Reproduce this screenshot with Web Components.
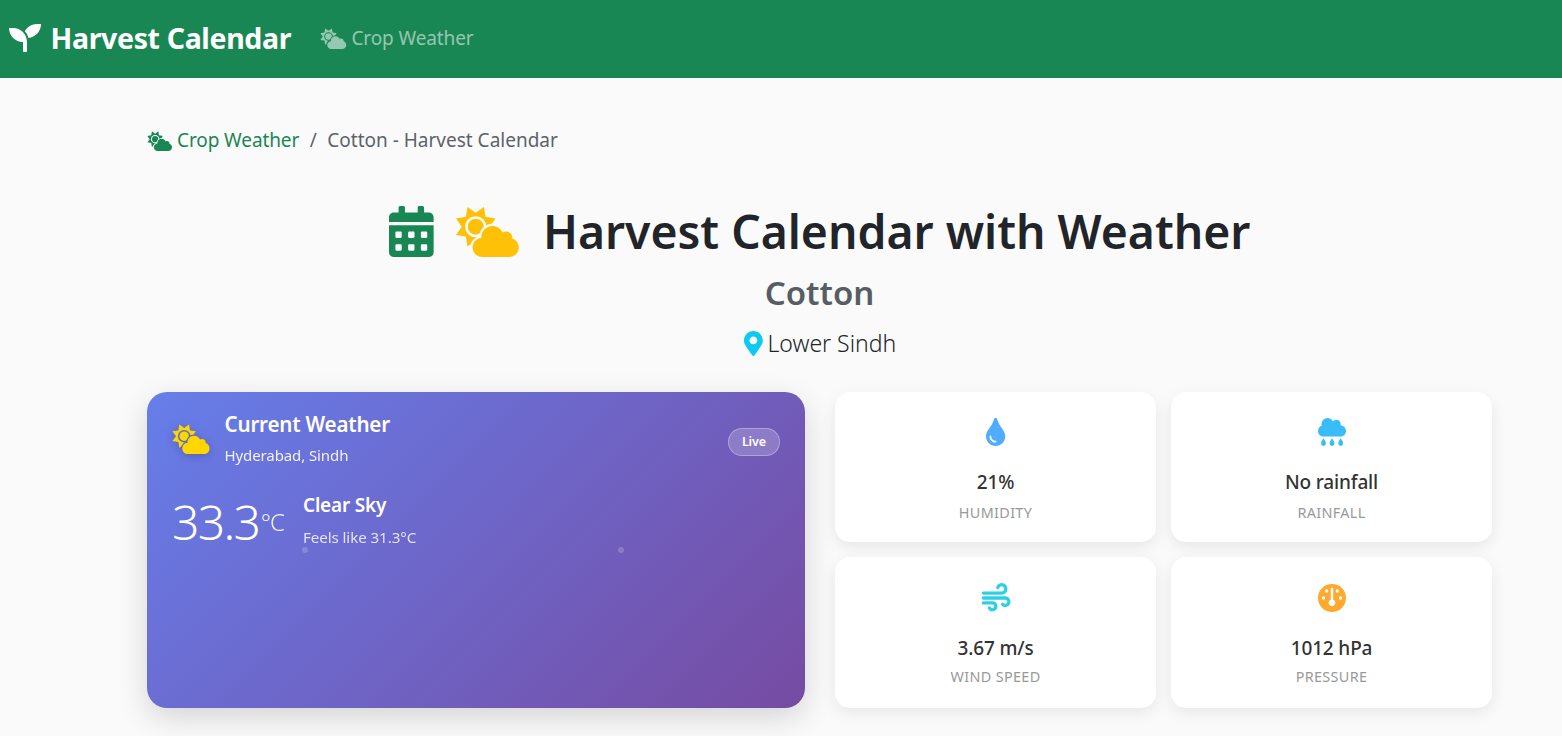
<!DOCTYPE html>
<html>
<head>
<meta charset="utf-8">
<title>Harvest Calendar</title>
<style>
  html, body { margin: 0; padding: 0; height: 100%; overflow: hidden; }
  body { background: #fafafa; font-family: "Noto Sans", "Open Sans", sans-serif; color: #212529; }
</style>
</head>
<body>
<app-navbar></app-navbar>
<page-main>
  <crumb-bar></crumb-bar>
  <page-title></page-title>
  <weather-grid>
    <weather-card></weather-card>
    <stat-card icon="droplet" color="#4facfe" value="21%" label="Humidity"></stat-card>
    <stat-card icon="rain" color="#38bdf8" value="No rainfall" label="Rainfall"></stat-card>
    <stat-card icon="wind" color="#2dd0e4" value="3.67 m/s" label="Wind Speed"></stat-card>
    <stat-card icon="gauge" color="#ffa92e" value="1012 hPa" label="Pressure"></stat-card>
  </weather-grid>
</page-main>

<script>
const CLOUD = 'M575.2 325.7c.2-1.9.8-3.7.8-5.7 0-35.3-28.7-64-64-64-12.6 0-24.2 3.8-34.1 10-17.6-38.8-56.5-66-101.9-66-61.8 0-112 50.1-112 112 0 3 .7 5.8.9 8.7-49.6 3.7-88.9 44.7-88.9 95.3 0 53 43 96 96 96h272c53 0 96-43 96-96 0-42.5-27.8-78.2-64.8-90.3z';

function sunStar() {
  const pts = [];
  for (let i = 0; i < 16; i++) {
    const r = i % 2 ? 140 : 215;
    const a = (i * 22.5 + 22.5) * Math.PI / 180;
    pts.push((208 + r * Math.sin(a)).toFixed(1) + ',' + (208 - r * Math.cos(a)).toFixed(1));
  }
  return pts.join(' ');
}

const ICONS = {
  seedling: ['0 0 512 512', '<path d="M64 96H0c0 123.7 100.3 224 224 224v144c0 8.8 7.2 16 16 16h32c8.8 0 16-7.2 16-16V320C288 196.3 187.7 96 64 96zm384-64c-84.2 0-157.4 46.5-195.7 115.2 27.7 30.2 48.2 66.9 59 107.6C424 243.1 512 147.9 512 32h-64z"/>'],
  calendar: ['0 0 448 512', '<path d="M0 464c0 26.5 21.5 48 48 48h352c26.5 0 48-21.5 48-48V192H0v272zm320-196c0-6.6 5.4-12 12-12h40c6.6 0 12 5.4 12 12v40c0 6.6-5.4 12-12 12h-40c-6.6 0-12-5.4-12-12v-40zm0 128c0-6.6 5.4-12 12-12h40c6.6 0 12 5.4 12 12v40c0 6.6-5.4 12-12 12h-40c-6.6 0-12-5.4-12-12v-40zM192 268c0-6.6 5.4-12 12-12h40c6.6 0 12 5.4 12 12v40c0 6.6-5.4 12-12 12h-40c-6.6 0-12-5.4-12-12v-40zm0 128c0-6.6 5.4-12 12-12h40c6.6 0 12 5.4 12 12v40c0 6.6-5.4 12-12 12h-40c-6.6 0-12-5.4-12-12v-40zM64 268c0-6.6 5.4-12 12-12h40c6.6 0 12 5.4 12 12v40c0 6.6-5.4 12-12 12H76c-6.6 0-12-5.4-12-12v-40zm0 128c0-6.6 5.4-12 12-12h40c6.6 0 12 5.4 12 12v40c0 6.6-5.4 12-12 12H76c-6.6 0-12-5.4-12-12v-40zM400 64h-48V16c0-8.8-7.2-16-16-16h-32c-8.8 0-16 7.2-16 16v48H160V16c0-8.8-7.2-16-16-16h-32c-8.8 0-16 7.2-16 16v48H48C21.5 64 0 85.5 0 112v48h448v-48c0-26.5-21.5-48-48-48z"/>'],
  marker: ['0 0 384 512', '<path d="M172.268 501.67C26.97 291.031 0 269.413 0 192 0 85.961 85.961 0 192 0s192 85.961 192 192c0 77.413-26.97 99.031-172.268 309.67-9.535 13.774-29.93 13.773-39.464 0zM192 272c44.183 0 80-35.817 80-80s-35.817-80-80-80-80 35.817-80 80 35.817 80 80 80z"/>'],
  droplet: ['0 0 352 512', '<path d="M205.22 22.09c-7.94-28.78-49.44-30.12-58.44 0C100.01 179.85 0 222.72 0 333.91 0 432.35 78.72 512 176 512s176-79.65 176-178.09c0-111.75-99.79-153.34-146.78-311.82zM176 448c-61.75 0-112-50.25-112-112 0-8.84 7.16-16 16-16s16 7.16 16 16c0 44.11 35.89 80 80 80 8.84 0 16 7.16 16 16s-7.16 16-16 16z"/>'],
  rain: ['0 0 512 512', '<path transform="scale(1 1.06)" d="M416 128c-.6 0-1.1.2-1.6.2 1.1-5.2 1.6-10.6 1.6-16.2 0-44.2-35.8-80-80-80-24.6 0-46.3 11.3-61 28.8C256.4 24.8 219.3 0 176 0 114.1 0 64 50.1 64 112c0 7.3.8 14.4 2.1 21.3C27.8 145.8 0 181.5 0 224c0 53 43 96 96 96h320c53 0 96-43 96-96s-43-96-96-96z"/><path d="M100 372c-20 34-44 60-44 94a44 44 0 0 0 88 0c0-34-24-60-44-94zM256 372c-20 34-44 60-44 94a44 44 0 0 0 88 0c0-34-24-60-44-94zM415 372c-20 34-44 60-44 94a44 44 0 0 0 88 0c0-34-24-60-44-94z"/>'],
  wind: ['0 0 512 512', '<g fill="none" stroke="currentColor" stroke-width="60" stroke-linecap="round"><path d="M24 165H360a76 76 0 1 0-72-100"/><path d="M24 256H425a68 68 0 1 1-48 116"/><path d="M24 347H190a62 62 0 1 1-54 92"/></g>'],
  gauge: ['0 0 512 512', '<circle cx="256" cy="256" r="256"/><g fill="#fff"><path d="M234 90a22 22 0 0 1 44 0v196a62 62 0 1 1-44 0z"/><circle cx="160" cy="128" r="30"/><circle cx="352" cy="128" r="30"/><circle cx="100" cy="256" r="30"/><circle cx="412" cy="256" r="30"/></g>']
};

class FaIcon extends HTMLElement {
  connectedCallback() {
    const root = this.attachShadow({ mode: 'open' });
    const name = this.getAttribute('name');
    let svg;
    if (name === 'cloud-sun') {
      svg = `<svg viewBox="0 0 640 512" fill="currentColor">
        <mask id="m" maskUnits="userSpaceOnUse" x="0" y="0" width="640" height="512">
          <polygon points="${sunStar()}" fill="#fff"/>
          <circle cx="208" cy="208" r="106" fill="#000"/>
          <circle cx="208" cy="208" r="80" fill="#fff"/>
          <path d="${CLOUD}" fill="#000" stroke="#000" stroke-width="44"/>
        </mask>
        <rect width="640" height="512" mask="url(#m)"/>
        <path d="${CLOUD}"/>
      </svg>`;
    } else {
      const [box, body] = ICONS[name];
      svg = `<svg viewBox="${box}" fill="currentColor">${body}</svg>`;
    }
    root.innerHTML = `<style>
      :host { display: inline-flex; line-height: 0; flex: none; }
      svg { height: 100%; width: auto; display: block; overflow: visible; }
    </style>${svg}`;
  }
}
customElements.define('fa-icon', FaIcon);

class AppNavbar extends HTMLElement {
  connectedCallback() {
    this.attachShadow({ mode: 'open' }).innerHTML = `
      <style>
        :host { display: flex; align-items: center; height: 78px; background: #198754; padding-left: 9px; padding-bottom: 2px; box-sizing: border-box; }
        .brand { display: flex; align-items: center; color: #fff; font-size: 28.5px; font-weight: 700; letter-spacing: -0.35px; }
        .brand fa-icon { height: 32px; margin-right: 9.5px; margin-top: -1px; }
        .link { display: flex; align-items: center; margin-left: 29px; color: rgba(255,255,255,.55); font-size: 19px; letter-spacing: -0.1px; }
        .link fa-icon { height: 21px; margin-right: 5px; margin-top: 1px; }
      </style>
      <div class="brand"><fa-icon name="seedling"></fa-icon>Harvest Calendar</div>
      <div class="link"><fa-icon name="cloud-sun"></fa-icon>Crop Weather</div>
    `;
  }
}
customElements.define('app-navbar', AppNavbar);

class PageMain extends HTMLElement {
  connectedCallback() {
    this.attachShadow({ mode: 'open' }).innerHTML = `
      <style>
        :host { display: block; padding: 47px 70px 0 147px; }
      </style>
      <slot></slot>
    `;
  }
}
customElements.define('page-main', PageMain);

class CrumbBar extends HTMLElement {
  connectedCallback() {
    this.attachShadow({ mode: 'open' }).innerHTML = `
      <style>
        :host { display: flex; align-items: center; height: 30px; font-size: 19px; color: #5c636a; }
        .home { display: flex; align-items: center; color: #198754; letter-spacing: -0.1px; }
        fa-icon { height: 20px; margin-right: 5px; margin-top: 1px; }
        .sep { padding: 0 10.5px; }
      </style>
      <span class="home"><fa-icon name="cloud-sun"></fa-icon>Crop Weather</span>
      <span class="sep">/</span>
      <span>Cotton - Harvest Calendar</span>
    `;
  }
}
customElements.define('crumb-bar', CrumbBar);

class PageTitle extends HTMLElement {
  connectedCallback() {
    this.attachShadow({ mode: 'open' }).innerHTML = `
      <style>
        :host { display: flex; flex-direction: column; align-items: center; margin-top: 45px; }
        h1 { display: flex; align-items: center; margin: 0; height: 62px; font-size: 46.3px; font-weight: 600; color: #212529; }
        h1 fa-icon { height: 51px; }
        .cal { color: #198754; margin-right: 22px; }
        .sun { color: #ffc107; margin-right: 24px; }
        h2 { margin: 8px 0 0; height: 46px; line-height: 46px; font-size: 33px; font-weight: 600; color: #565e64; }
        .place { display: flex; align-items: center; height: 54px; font-size: 23px; font-weight: 300; color: #212529; margin-top: 0; margin-bottom: -1px; }
        .place fa-icon { height: 25px; margin-right: 5px; margin-left: 1px; color: #0dcaf0; }
      </style>
      <h1><fa-icon class="cal" name="calendar"></fa-icon><fa-icon class="sun" name="cloud-sun"></fa-icon>Harvest Calendar with Weather</h1>
      <h2>Cotton</h2>
      <div class="place"><fa-icon name="marker"></fa-icon>Lower Sindh</div>
    `;
  }
}
customElements.define('page-title', PageTitle);

class WeatherGrid extends HTMLElement {
  connectedCallback() {
    this.attachShadow({ mode: 'open' }).innerHTML = `
      <style>
        :host { display: grid; grid-template-columns: 658px 1fr; column-gap: 30px; margin-top: 23px; height: 316px; }
        .stats { display: grid; grid-template-columns: 1fr 1fr; grid-template-rows: 150px 151px; gap: 15px; }
      </style>
      <slot name="main"></slot>
      <div class="stats"><slot></slot></div>
    `;
    this.querySelector('weather-card').slot = 'main';
  }
}
customElements.define('weather-grid', WeatherGrid);

class WeatherCard extends HTMLElement {
  connectedCallback() {
    this.attachShadow({ mode: 'open' }).innerHTML = `
      <style>
        :host { display: block; position: relative; box-sizing: border-box; height: 316px; padding: 19px 25px;
          border-radius: 20px; color: #fff; background: linear-gradient(135deg, #667eea 0%, #764ba2 100%);
          box-shadow: 0 10px 30px rgba(0,0,0,.15); }
        .head { display: flex; align-items: flex-start; justify-content: space-between; }
        .who { display: flex; }
        .who fa-icon { height: 30px; margin: 13px 15px 0 0; color: #ffd600; filter: drop-shadow(0 2px 4px rgba(0,0,0,.2)); }
        .title { font-size: 20.6px; font-weight: 600; line-height: 26px; letter-spacing: -0.2px; }
        .loc { font-size: 15px; line-height: 20px; margin-top: 8px; opacity: .9; letter-spacing: -0.1px; }
        .live { margin-top: 17px; height: 28px; line-height: 26px; box-sizing: border-box; padding: 0 13px; border: 1px solid rgba(255,255,255,.3);
          border-radius: 14px; background: rgba(255,255,255,.2); font-size: 12.5px; font-weight: 600; letter-spacing: -0.1px; }
        .now { display: flex; margin-top: 25px; }
        .temp { width: 131px; font-size: 48px; font-weight: 300; line-height: 64px; letter-spacing: -1.7px; display: flex; align-items: baseline; }
        .temp small { font-size: 24px; font-weight: 300; letter-spacing: -1px; margin-left: 1.5px; opacity: .9; position: relative; top: -9px; }
        .desc { margin: 2px 0 0 0; }
        .sky { font-size: 19px; font-weight: 600; line-height: 26px; letter-spacing: -0.2px; }
        .feels { font-size: 15.2px; line-height: 20px; margin-top: 9px; opacity: .8; letter-spacing: -0.1px; }
        .dot { position: absolute; width: 6px; height: 6px; border-radius: 50%; background: rgba(255,255,255,.18); top: 155px; }
      </style>
      <span class="dot" style="left:155px"></span>
      <span class="dot" style="left:471px"></span>
      <div class="head">
        <div class="who">
          <fa-icon name="cloud-sun"></fa-icon>
          <div>
            <div class="title">Current Weather</div>
            <div class="loc">Hyderabad, Sindh</div>
          </div>
        </div>
        <span class="live">Live</span>
      </div>
      <div class="now">
        <div class="temp">33.3<small>°C</small></div>
        <div class="desc">
          <div class="sky">Clear Sky</div>
          <div class="feels">Feels like 31.3°C</div>
        </div>
      </div>
    `;
  }
}
customElements.define('weather-card', WeatherCard);

class StatCard extends HTMLElement {
  connectedCallback() {
    const icon = this.getAttribute('icon');
    const color = this.getAttribute('color');
    this.attachShadow({ mode: 'open' }).innerHTML = `
      <style>
        :host { display: flex; flex-direction: column; align-items: center; background: #fff; border-radius: 15px;
          box-shadow: 0 5px 15px rgba(0,0,0,.08); box-sizing: border-box; padding-top: 26px; }
        :host(:nth-child(n+4)) { padding-top: 27px; }
        fa-icon { height: 28px; color: ${color}; }
        .value { margin-top: 23px; font-size: 19px; font-weight: 500; line-height: 26px; color: #333; letter-spacing: -0.15px; }
        .label { margin-top: 7px; font-size: 14.4px; line-height: 18px; color: #999; text-transform: uppercase; letter-spacing: .35px; }
        :host(:nth-child(-n+3)) .label { margin-top: 9px; }
      </style>
      <fa-icon name="${icon}"></fa-icon>
      <div class="value">${this.getAttribute('value')}</div>
      <div class="label">${this.getAttribute('label')}</div>
    `;
  }
}
customElements.define('stat-card', StatCard);
</script>
</body>
</html>
